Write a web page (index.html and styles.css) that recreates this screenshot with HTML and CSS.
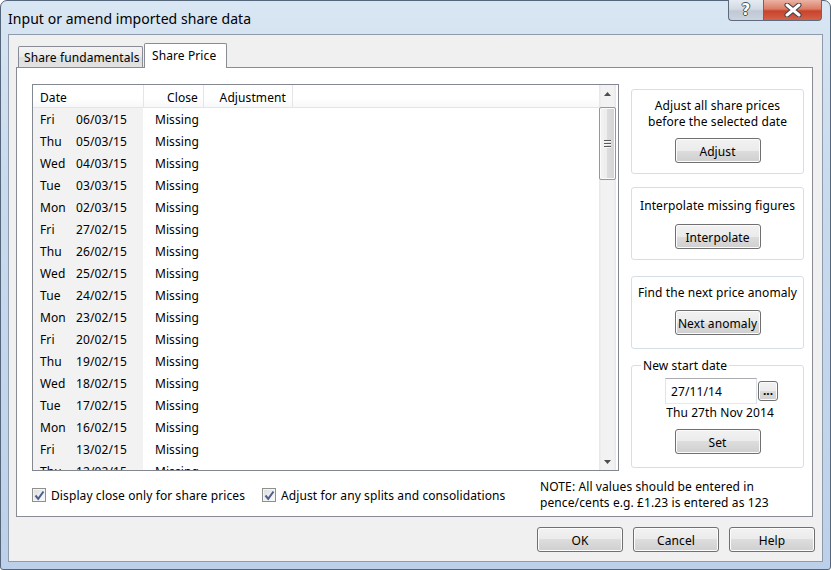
FILE: index.html
```html
<!DOCTYPE html>
<html>
<head>
<meta charset="utf-8">
<title>Input or amend imported share data</title>
<link rel="stylesheet" href="styles.css">
</head>
<body>
<div class="window">
  <div class="titlebar">
    <div class="title">Input or amend imported share data</div>
    <div class="caption-btns">
      <div class="cap-help">?</div>
      <div class="cap-close">
        <svg width="20" height="14" viewBox="0 0 20 14">
          <path d="M4 2 L16 12 M16 2 L4 12" stroke="#3a3f48" stroke-width="5" stroke-linecap="round"/>
          <path d="M4 2 L16 12 M16 2 L4 12" stroke="#ffffff" stroke-width="3" stroke-linecap="round"/>
        </svg>
      </div>
    </div>
  </div>
  <div class="client">
    <div class="tabs">
      <div class="tab">Share fundamentals</div>
      <div class="tab active">Share Price</div>
    </div>
    <div class="tabpanel">
      <div class="listview">
        <div class="lv-main">
          <div class="lv-header">
            <div class="hcell c-date">Date</div>
            <div class="hcell c-close">Close</div>
            <div class="hcell c-adj">Adjustment</div>
            <div class="hcell c-rest"></div>
          </div>
          <div class="lv-rows">
            <div class="row"><div class="c-date"><span class="day">Fri</span>06/03/15</div><div class="c-close">Missing</div></div>
            <div class="row"><div class="c-date"><span class="day">Thu</span>05/03/15</div><div class="c-close">Missing</div></div>
            <div class="row"><div class="c-date"><span class="day">Wed</span>04/03/15</div><div class="c-close">Missing</div></div>
            <div class="row"><div class="c-date"><span class="day">Tue</span>03/03/15</div><div class="c-close">Missing</div></div>
            <div class="row"><div class="c-date"><span class="day">Mon</span>02/03/15</div><div class="c-close">Missing</div></div>
            <div class="row"><div class="c-date"><span class="day">Fri</span>27/02/15</div><div class="c-close">Missing</div></div>
            <div class="row"><div class="c-date"><span class="day">Thu</span>26/02/15</div><div class="c-close">Missing</div></div>
            <div class="row"><div class="c-date"><span class="day">Wed</span>25/02/15</div><div class="c-close">Missing</div></div>
            <div class="row"><div class="c-date"><span class="day">Tue</span>24/02/15</div><div class="c-close">Missing</div></div>
            <div class="row"><div class="c-date"><span class="day">Mon</span>23/02/15</div><div class="c-close">Missing</div></div>
            <div class="row"><div class="c-date"><span class="day">Fri</span>20/02/15</div><div class="c-close">Missing</div></div>
            <div class="row"><div class="c-date"><span class="day">Thu</span>19/02/15</div><div class="c-close">Missing</div></div>
            <div class="row"><div class="c-date"><span class="day">Wed</span>18/02/15</div><div class="c-close">Missing</div></div>
            <div class="row"><div class="c-date"><span class="day">Tue</span>17/02/15</div><div class="c-close">Missing</div></div>
            <div class="row"><div class="c-date"><span class="day">Mon</span>16/02/15</div><div class="c-close">Missing</div></div>
            <div class="row"><div class="c-date"><span class="day">Fri</span>13/02/15</div><div class="c-close">Missing</div></div>
            <div class="row"><div class="c-date"><span class="day">Thu</span>12/02/15</div><div class="c-close">Missing</div></div>
          </div>
        </div>
        <div class="scrollbar">
          <div class="sb-arrow">
            <svg width="7" height="4" viewBox="0 0 7 4"><path d="M0 4 L3.5 0 L7 4 Z" fill="#4d4d4d"/></svg>
          </div>
          <div class="sb-track">
            <div class="sb-thumb">
              <div class="grip"></div><div class="grip"></div><div class="grip"></div>
            </div>
          </div>
          <div class="sb-arrow">
            <svg width="7" height="4" viewBox="0 0 7 4"><path d="M0 0 L7 0 L3.5 4 Z" fill="#4d4d4d"/></svg>
          </div>
        </div>
      </div>

      <div class="sidebar">
        <div class="box box1">
          <div class="box-text">Adjust all share prices<br>before the selected date</div>
          <button class="btn">Adjust</button>
        </div>
        <div class="box box2">
          <div class="box-text">Interpolate missing figures</div>
          <button class="btn">Interpolate</button>
        </div>
        <div class="box box3">
          <div class="box-text">Find the next price anomaly</div>
          <button class="btn">Next anomaly</button>
        </div>
        <fieldset class="group">
          <legend>New start date</legend>
          <div class="date-row">
            <div class="date-input">27/11/14</div>
            <button class="btn-dots">...</button>
          </div>
          <div class="date-text">Thu 27th Nov 2014</div>
          <button class="btn">Set</button>
        </fieldset>
      </div>

      <div class="footer">
        <label class="check">
          <span class="checkbox"><svg width="11" height="11" viewBox="0 0 11 11"><path d="M1.5 5.5 L4.2 8.8 L9.5 1.5" fill="none" stroke="#4b5f8e" stroke-width="2"/></svg></span>
          <span>Display close only for share prices</span>
        </label>
        <label class="check">
          <span class="checkbox"><svg width="11" height="11" viewBox="0 0 11 11"><path d="M1.5 5.5 L4.2 8.8 L9.5 1.5" fill="none" stroke="#4b5f8e" stroke-width="2"/></svg></span>
          <span>Adjust for any splits and consolidations</span>
        </label>
        <div class="note">NOTE: All values should be entered in<br>pence/cents e.g. £1.23 is entered as 123</div>
      </div>
    </div>
    <div class="dialog-buttons">
      <button class="btn">OK</button>
      <button class="btn">Cancel</button>
      <button class="btn">Help</button>
    </div>
  </div>
</div>
</body>
</html>
```
FILE: styles.css
```css
* { box-sizing: border-box; }
html, body { margin: 0; padding: 0; }
body {
  width: 831px;
  height: 570px;
  overflow: hidden;
  background: #ffffff;
  font-family: "Noto Sans", "Segoe UI", sans-serif;
  font-size: 12px;
  letter-spacing: 0.1px;
  color: #000;
}

.window {
  width: 831px;
  height: 570px;
  border: 1px solid #55657a;
  border-radius: 7px 7px 3px 3px;
  background: linear-gradient(180deg, #d9e6f3 0%, #c9dbee 30%, #bcd1e9 100%);
  display: flex;
  flex-direction: column;
  padding: 0 7px 7px 7px;
}

/* Title bar */
.titlebar {
  height: 33px;
  display: flex;
  justify-content: space-between;
  align-items: flex-start;
  flex: none;
}
.title {
  margin-top: 8px;
  font-size: 14px;
  letter-spacing: 0.05px;
  line-height: 20px;
  color: #000;
}
.caption-btns {
  display: flex;
  margin-top: -1px;
  margin-right: 1px;
}
.cap-help, .cap-close {
  height: 21px;
  border: 1px solid #5d6a7c;
  border-top: none;
  display: flex;
  align-items: center;
  justify-content: center;
}
.cap-help {
  width: 35px;
  border-right: none;
  border-radius: 0 0 0 4px;
  background: linear-gradient(180deg, #e6ebf1 0%, #d3dae3 45%, #bfc9d5 55%, #cbd3de 100%);
  color: #fff;
  font-family: "DejaVu Sans", sans-serif;
  font-weight: bold;
  font-size: 15px;
  line-height: 20px;
  text-shadow: -1px 0 #4a525e, 1px 0 #4a525e, 0 -1px #4a525e, 0 1px #4a525e;
}
.cap-close {
  width: 59px;
  border-radius: 0 0 4px 0;
  background: linear-gradient(180deg, #eab3a5 0%, #dc7c66 45%, #c8432a 55%, #d4614a 100%);
}

/* Client */
.client {
  flex: 1;
  background: #f0f0f0;
  border: 1px solid #8e9bab;
  padding: 8px 9px 0 7px;
  display: flex;
  flex-direction: column;
}

.tabs {
  display: flex;
  align-items: flex-end;
  height: 24px;
  padding-left: 2px;
  position: relative;
  z-index: 1;
}
.tab {
  height: 21px;
  width: 125px;
  border: 1px solid #898c95;
  border-bottom: none;
  border-radius: 2px 2px 0 0;
  background: linear-gradient(180deg, #f3f3f3 0%, #ebebeb 50%, #dedede 50%, #e3e3e3 100%);
  line-height: 20px;
  padding-left: 5px;
  padding-top: 1px;
  white-space: nowrap;
}
.tab.active {
  width: 83px;
  height: 25px;
  margin-bottom: -1px;
  margin-left: 1px;
  background: #ffffff;
  padding-left: 7px;
  padding-top: 1px;
  line-height: 22px;
}

.tabpanel {
  height: 450px;
  background: #ffffff;
  border: 1px solid #898c95;
  padding: 16px 8px 0 15px;
  display: grid;
  grid-template-columns: 587px 173px;
  grid-template-rows: 387px auto;
  column-gap: 12px;
}

/* List view */
.listview {
  border: 1px solid #828790;
  display: flex;
  overflow: hidden;
}
.lv-main {
  flex: 1;
  overflow: hidden;
}
.lv-header {
  display: flex;
  height: 23px;
  border-bottom: 1px solid #e5e5e5;
  background: linear-gradient(180deg, #ffffff 0%, #ffffff 60%, #f7f8fa 100%);
}
.hcell {
  height: 22px;
  line-height: 22px;
  padding-top: 2px;
  border-right: 1px solid #e5e5e5;
  white-space: nowrap;
}
.hcell.c-date { width: 111px; padding-left: 7px; }
.hcell.c-close { width: 60px; text-align: right; padding-right: 5px; }
.hcell.c-adj { width: 89px; text-align: right; padding-right: 6px; }
.hcell.c-rest { flex: 1; border-right: none; }

.row {
  display: flex;
  height: 22px;
  line-height: 22px;
}
.row .c-date {
  width: 110px;
  background: #f2f2f2;
  padding-left: 7px;
  padding-top: 1px;
  white-space: nowrap;
}
.row .day {
  display: inline-block;
  width: 36px;
}
.row .c-close {
  width: 61px;
  text-align: right;
  padding-right: 5px;
  padding-top: 1px;
}

.scrollbar {
  width: 17px;
  margin-right: 2px;
  display: flex;
  flex-direction: column;
  background: linear-gradient(90deg, #e6e6e6 0%, #f2f2f2 15%, #f2f2f2 85%, #e6e6e6 100%);
}
.sb-arrow {
  height: 17px;
  display: flex;
  align-items: center;
  justify-content: center;
  flex: none;
}
.sb-track {
  flex: 1;
  padding-top: 5px;
}
.sb-thumb {
  height: 73px;
  border: 1px solid #979797;
  border-radius: 2px;
  background: linear-gradient(90deg, #f3f3f3 0%, #ececec 50%, #dcdcdc 50%, #d3d3d3 100%);
  box-shadow: inset 0 0 0 1px #fbfbfb;
  display: flex;
  flex-direction: column;
  align-items: center;
  justify-content: center;
  gap: 2px;
}
.grip {
  width: 7px;
  height: 1px;
  background: #5a5a5a;
  box-shadow: 0 1px 0 #f8f8f8;
}

/* Sidebar */
.sidebar {
  padding-top: 5px;
  display: flex;
  flex-direction: column;
}
.box {
  border: 1px solid #d5dfe5;
  border-radius: 3px;
  display: flex;
  flex-direction: column;
  align-items: center;
  text-align: center;
}
.box-text { line-height: 16px; white-space: nowrap; }
.box1 { height: 85px; padding-top: 8px; }
.box1 .btn { margin-top: 8px; }
.box2 { height: 73px; margin-top: 13px; padding-top: 10px; }
.box2 .btn { margin-top: 10px; }
.box3 { height: 73px; margin-top: 16px; padding-top: 8px; }
.box3 .btn { margin-top: 9px; }

.group {
  margin: 8px 0 0 0;
  padding: 4px 0 13px 0;
  border: 1px solid #d5dfe5;
  border-radius: 3px;
  min-width: 0;
  display: flex;
  flex-direction: column;
  align-items: center;
}
.group legend {
  margin-left: 9px;
  padding: 1px 2px 0 2px;
  line-height: 16px;
}
.date-row {
  display: flex;
  align-items: center;
  align-self: flex-start;
  margin-left: 33px;
  gap: 1px;
}
.date-input {
  width: 92px;
  height: 26px;
  border: 1px solid #abadb3;
  border-color: #abadb3 #dbdfe6 #e3e9ef #e2e3ea;
  background: #fff;
  padding-left: 5px;
  padding-top: 1px;
  line-height: 23px;
}
.btn-dots {
  width: 20px;
  height: 20px;
  padding: 0;
  border: 1px solid #707070;
  border-radius: 3px;
  background: linear-gradient(180deg, #f2f2f2 0%, #ebebeb 50%, #dddddd 50%, #cfcfcf 100%);
  box-shadow: inset 0 0 0 1px #fcfcfc;
  font-family: inherit;
  font-size: 12px;
  font-weight: bold;
  line-height: 14px;
  color: #000;
}
.date-text { line-height: 16px; margin-left: 5px; padding-top: 1px; }
.group .btn { margin-top: 8px; }

.btn {
  width: 86px;
  height: 25px;
  padding: 2px 0 0 0;
  border: 1px solid #707070;
  border-radius: 3px;
  background: linear-gradient(180deg, #f2f2f2 0%, #ebebeb 50%, #dddddd 50%, #cfcfcf 100%);
  box-shadow: inset 0 0 0 1px #fcfcfc;
  font-family: inherit;
  font-size: 12px;
  letter-spacing: 0.1px;
  color: #000;
  line-height: 20px;
  flex: none;
}

/* Footer */
.footer {
  grid-column: 1 / -1;
  display: grid;
  grid-template-columns: 230px 278px auto;
  align-items: center;
  padding-top: 3px;
}
.check {
  display: flex;
  align-items: center;
  gap: 5px;
  white-space: nowrap;
}
.checkbox {
  width: 14px;
  height: 14px;
  border: 1px solid #8e8f8f;
  background: linear-gradient(135deg, #dcdcdc 0%, #f0f0f0 60%, #fafafa 100%);
  box-shadow: inset 0 0 0 1px #f4f4f4;
  display: flex;
  align-items: center;
  justify-content: center;
}
.note { line-height: 16px; white-space: nowrap; }

.dialog-buttons {
  display: flex;
  justify-content: flex-end;
  gap: 10px;
  margin-top: 10px;
  margin-right: -2px;
}
```
